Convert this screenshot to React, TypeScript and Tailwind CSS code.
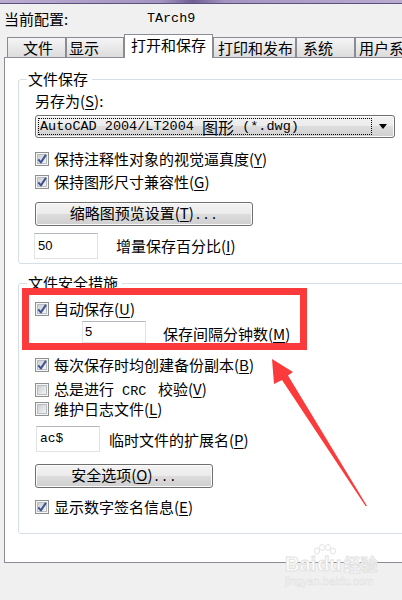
import React from "react";

const mono = "font-['Liberation_Mono',monospace]";

function M({ k }: { k: string }) {
  return (
    <span>
      (<span className="underline underline-offset-[2px] decoration-[1px]">{k}</span>)
    </span>
  );
}

function Check({ checked }: { checked: boolean }) {
  return (
    <svg width="14" height="14" viewBox="0 0 14 14" className="shrink-0">
      <defs>
        <linearGradient id="cbg" x1="0" y1="0" x2="1" y2="1">
          <stop offset="0" stopColor="#c9ccd0" />
          <stop offset="1" stopColor="#f6f6f6" />
        </linearGradient>
      </defs>
      <rect x="0.5" y="0.5" width="13" height="13" fill="#f5f5f5" stroke="#8e8f8f" />
      <rect x="2.5" y="2.5" width="9" height="9" fill="url(#cbg)" stroke="#b9bcc0" />
      {checked && (
        <path
          d="M3.3 7.4 L5.9 10.4 L10.9 2.9"
          fill="none"
          stroke="#3d5494"
          strokeWidth="2"
          strokeLinejoin="round"
        />
      )}
    </svg>
  );
}

function Row({ checked, children, className }: { checked: boolean; children: React.ReactNode; className: string }) {
  return (
    <div className={"flex items-center h-[16px] gap-[5px] leading-[16px] " + className}>
      <Check checked={checked} />
      <span className="whitespace-pre">{children}</span>
    </div>
  );
}

const btnBg =
  "bg-[linear-gradient(#f3f3f3_0%,#ebebeb_50%,#dddddd_50%,#cfcfcf_100%)] border border-[#707070] rounded-[3px] shadow-[inset_0_0_0_1px_#fbfbfb]";

const inputCls = "bg-white border border-[#dfe3e8] border-t-[#b3b7bd] flex items-center";

const tabIn =
  "shrink-0 whitespace-nowrap mt-[3px] h-[20px] border-t border-l border-r border-[#898c95] bg-[linear-gradient(#f5f5f5,#dcdcdc)]";

export default function App() {
  return (
    <div className="relative w-[402px] h-[600px] overflow-hidden bg-[#f0f0f0] text-black text-[15px] font-['Noto_Sans_CJK_SC','Liberation_Sans',sans-serif]">
      {/* window top edge */}
      <div className="h-[4px] bg-[linear-gradient(90deg,#b9acd0_0%,#a395c0_40%,#6f5f95_48%,#a395c0_56%,#b9acd0_100%)] border-b border-[#5d507e]" />

      {/* current profile */}
      <div className="h-[30px] flex items-center pl-[4px] leading-[18px]">
        <span className="w-[143px]">当前配置:</span>
        <span className={mono + " text-[13.4px]"}>TArch9</span>
      </div>

      {/* tabs */}
      <div className="relative z-10 flex items-start h-[24px] pl-[7px] leading-[20px] w-[460px]">
        <div className={tabIn + " w-[59px] pl-[15px]"}>文件</div>
        <div className={tabIn + " w-[58px] pl-[2px]"}>显示</div>
        <div className="shrink-0 whitespace-nowrap h-[24px] w-[89px] pl-[6px] pt-[1px] leading-[18px] border-t border-l border-r border-[#898c95] bg-white">
          打开和保存
        </div>
        <div className={tabIn + " w-[83px] pl-[4px]"}>打印和发布</div>
        <div className={tabIn + " w-[59px] pl-[6px]"}>系统</div>
        <div className={tabIn + " w-[96px] pl-[3px]"}>用户系统配置</div>
      </div>

      {/* panel */}
      <div className="-mt-[1px] ml-[4px] w-[420px] h-[506px] bg-white border border-[#8c8c96] pt-[21px]">
        {/* group 1 */}
        <div className="relative ml-[13px] w-[410px] h-[185px] border border-[#d5dfe5] rounded-[3px] pl-[16px] pt-[12px]">
          <div className="absolute left-[8px] -top-[11px] h-[20px] leading-[20px] bg-white pl-[1px] pr-[4px]">文件保存</div>
          <div className="h-[18px] leading-[18px]">
            另存为<M k="S" />:
          </div>
          <div className={"mt-[5px] w-[360px] h-[23px] flex items-stretch " + btnBg}>
            <div className="flex-1 m-[2px] mr-0 border border-dotted border-black flex items-center pl-[1px] leading-[16px] whitespace-pre">
              <span className={mono + " text-[13.5px]"}>AutoCAD 2004/LT2004 </span>
              <span className="text-[16px]">图形</span>
              <span className={mono + " text-[13.5px]"}> (*.dwg)</span>
            </div>
            <div className="w-[22px] flex items-center justify-center">
              <svg width="8" height="5" viewBox="0 0 8 5">
                <path d="M0 0 H8 L4 5 Z" fill="#000" />
              </svg>
            </div>
          </div>
          <Row checked className="mt-[13px]">
            保持注释性对象的视觉逼真度<M k="Y" />
          </Row>
          <Row checked className="mt-[7px]">
            保持图形尺寸兼容性<M k="G" />
          </Row>
          <div className={"mt-[12px] w-[218px] h-[24px] flex items-center justify-center leading-[18px] " + btnBg}>
            <span>
              缩略图预览设置<M k="T" />
              <span className={mono + " text-[13.5px]"}>...</span>
            </span>
          </div>
          <div className="mt-[7px] flex items-center">
            <div className={"-ml-[1px] w-[64px] h-[26px] pl-[3px] " + inputCls}>
              <span className="font-['Liberation_Sans',sans-serif] text-[13px] leading-[14px]">50</span>
            </div>
            <span className="ml-[18px] leading-[18px]">
              增量保存百分比<M k="I" />
            </span>
          </div>
        </div>

        {/* group 2 */}
        <div className="relative mt-[19px] ml-[13px] w-[410px] h-[251px] border border-[#d5dfe5] rounded-[3px] pl-[16px] pt-[17px]">
          <div className="absolute left-[8px] -top-[11px] h-[20px] leading-[20px] bg-white pl-[1px] pr-[4px]">文件安全措施</div>
          <Row checked className="">
            自动保存<M k="U" />
          </Row>
          <div className="mt-[4px] flex items-center">
            <div className={"ml-[47px] w-[64px] h-[22px] pl-[2px] " + inputCls}>
              <span className="font-['Liberation_Sans',sans-serif] text-[13px] leading-[14px]">5</span>
            </div>
            <span className="ml-[17px] leading-[18px] mt-[3px]">
              保存间隔分钟数<M k="M" />
            </span>
          </div>
          <Row checked className="mt-[14px]">
            每次保存时均创建备份副本<M k="B" />
          </Row>
          <Row checked={false} className="mt-[9px]">
            总是进行<span className={mono + " text-[13.5px]"}> CRC </span> 校验<M k="V" />
          </Row>
          <Row checked={false} className="mt-[3px]">
            维护日志文件<M k="L" />
          </Row>
          <div className="mt-[9px] flex items-center">
            <div className={"ml-[1px] w-[64px] h-[26px] pl-[3px] " + inputCls}>
              <span className={mono + " text-[13px] leading-[14px]"}>ac$</span>
            </div>
            <span className="ml-[9px] leading-[18px] mt-[2px]">
              临时文件的扩展名<M k="P" />
            </span>
          </div>
          <div className={"mt-[12px] w-[178px] h-[24px] flex items-center justify-center leading-[18px] " + btnBg}>
            <span>
              安全选项<M k="O" />
              <span className={mono + " text-[13.5px]"}>...</span>
            </span>
          </div>
          <Row checked className="mt-[11px]">
            显示数字签名信息<M k="E" />
          </Row>
        </div>
      </div>

      {/* red highlight box */}
      <div className="absolute left-[22px] top-[288px] w-[285px] h-[62px] border-[7px] border-[#fb3b3b]" />

      {/* red arrow */}
      <svg className="absolute left-0 top-0 pointer-events-none" width="402" height="600" viewBox="0 0 402 600">
        <polygon
          points="272,359 293,372 288,375.5 367,506 365.5,506 282,380 274,384"
          fill="#fb3b3b"
        />
      </svg>

      {/* watermark */}
      <div className="absolute left-[285px] top-[544px] w-[90px] text-white [-webkit-text-stroke:1px_#e2e2e2] font-['Liberation_Sans',sans-serif]">
        <svg className="absolute left-[27px] top-0" width="26" height="14" viewBox="0 0 26 14">
          <g fill="#fff" stroke="#e2e2e2">
            <ellipse cx="5" cy="7" rx="2.5" ry="3" />
            <ellipse cx="10" cy="3.5" rx="2.5" ry="3" />
            <ellipse cx="16" cy="3.5" rx="2.5" ry="3" />
            <ellipse cx="21" cy="7" rx="2.5" ry="3" />
          </g>
        </svg>
        <div className="pt-[9px] flex items-end text-[20px] font-bold leading-[22px] whitespace-nowrap">
          <span>Bai</span>
          <span className="ml-[1px]">du</span>
          <span className="ml-[2px] text-[17px] font-['Noto_Sans_CJK_SC',sans-serif]">经验</span>
        </div>
        <div className="text-[11px] leading-[12px] [-webkit-text-stroke:0.6px_#e2e2e2] whitespace-nowrap">jingyan.baidu.com</div>
      </div>
    </div>
  );
}
